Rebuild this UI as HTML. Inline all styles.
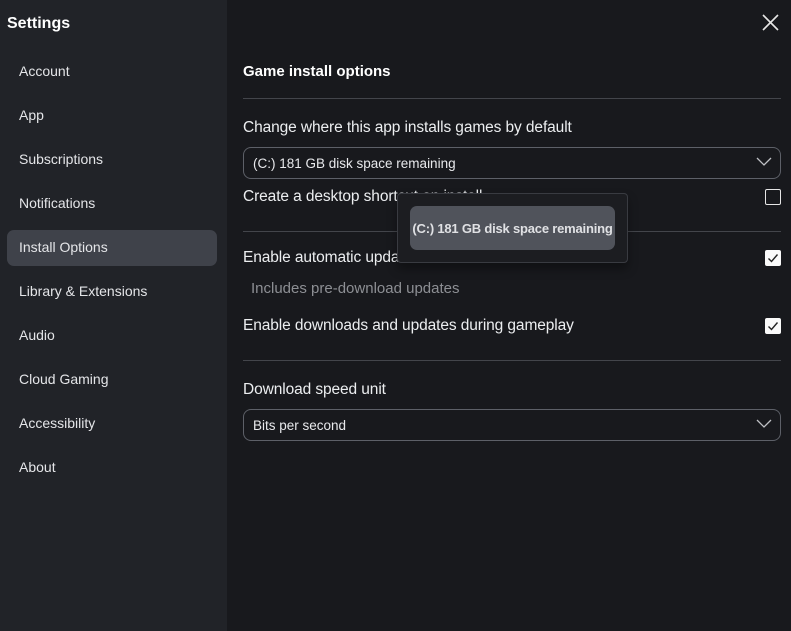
<!DOCTYPE html>
<html><head><meta charset="utf-8"><style>
*{margin:0;padding:0;box-sizing:border-box}
body{width:791px;height:631px;background:#18191d;font-family:"Liberation Sans","DejaVu Sans",sans-serif;color:#e8e9ec;position:relative;overflow:hidden}
.side{position:absolute;left:0;top:0;width:227px;height:631px;background:#212328}
.a{position:absolute;white-space:nowrap}
.nav{position:absolute;left:19px;font-size:14px;color:#e4e5e8}
.sel{position:absolute;left:7px;top:230px;width:210px;height:36px;background:#3f424a;border-radius:7px}
.hr{position:absolute;left:243px;width:538px;height:1px;background:#43454b}
.lbl{font-size:15.5px;color:#eceef0;letter-spacing:-0.1px}
.dd{position:absolute;left:243px;width:538px;height:32px;border:1px solid #5d6068;border-radius:8px;font-size:13.5px;padding-left:9px;line-height:31px;color:#e8e9ec}
.cb{position:absolute;left:765px;width:16px;height:16px;border-radius:2px}
</style></head><body>
<div class="side"></div>
<div class="a" style="left:7px;top:15px;font-size:16px;font-weight:bold;color:#fff">Settings</div>
<div class="sel"></div>
<div class="nav" style="top:63px">Account</div>
<div class="nav" style="top:107px">App</div>
<div class="nav" style="top:151px">Subscriptions</div>
<div class="nav" style="top:195px">Notifications</div>
<div class="nav" style="top:239px">Install Options</div>
<div class="nav" style="top:283px">Library &amp; Extensions</div>
<div class="nav" style="top:327px">Audio</div>
<div class="nav" style="top:371px">Cloud Gaming</div>
<div class="nav" style="top:415px">Accessibility</div>
<div class="nav" style="top:459px">About</div>
<svg class="a" style="left:762px;top:14px" width="17" height="17"><path d="M1 1L16 16M16 1L1 16" stroke="#e6e6e6" stroke-width="1.6"/></svg>
<div class="a" style="left:243px;top:63px;font-size:15px;font-weight:bold;color:#fff">Game install options</div>
<div class="hr" style="top:98px"></div>
<div class="a lbl" style="left:243px;top:119px">Change where this app installs games by default</div>
<div class="dd" style="top:147px">(C:) 181 GB disk space remaining</div>
<svg class="a" style="left:756px;top:157px" width="16" height="10"><path d="M1 1L8 8L15 1" stroke="#bfc1c5" stroke-width="1.3" fill="none"/></svg>
<div class="a lbl" style="left:243px;top:188px">Create a desktop shortcut on install</div>
<div class="cb" style="top:189px;border:1.5px solid #e6e6e6"></div>
<div class="hr" style="top:231px"></div>
<div class="a lbl" style="left:243px;top:249px">Enable automatic updates</div>
<div class="cb" style="top:250px;background:#fafafa"><svg width="16" height="16"><path d="M3.5 8.5L6.5 11.5L12.5 4.5" stroke="#222" stroke-width="1.4" fill="none"/></svg></div>
<div class="a" style="left:251px;top:280px;font-size:15px;color:#8d8f94">Includes pre-download updates</div>
<div class="a lbl" style="left:243px;top:317px">Enable downloads and updates during gameplay</div>
<div class="cb" style="top:318px;background:#fafafa"><svg width="16" height="16"><path d="M3.5 8.5L6.5 11.5L12.5 4.5" stroke="#222" stroke-width="1.4" fill="none"/></svg></div>
<div class="hr" style="top:360px"></div>
<div class="a lbl" style="left:243px;top:381px">Download speed unit</div>
<div class="dd" style="top:409px">Bits per second</div>
<svg class="a" style="left:756px;top:419px" width="16" height="10"><path d="M1 1L8 8L15 1" stroke="#bfc1c5" stroke-width="1.3" fill="none"/></svg>
<div class="a" style="left:397px;top:193px;width:231px;height:70px;background:#1c1d21;border:1px solid #393b41;border-radius:4px;box-shadow:0 6px 10px rgba(0,0,0,.35)"></div>
<div class="a" style="left:410px;top:206px;width:205px;height:44px;background:#50535b;border-radius:7px;font-size:13px;font-weight:bold;color:#e0e1e4;line-height:46px;text-align:center;letter-spacing:-0.2px">(C:) 181 GB disk space remaining</div>
</body></html>
